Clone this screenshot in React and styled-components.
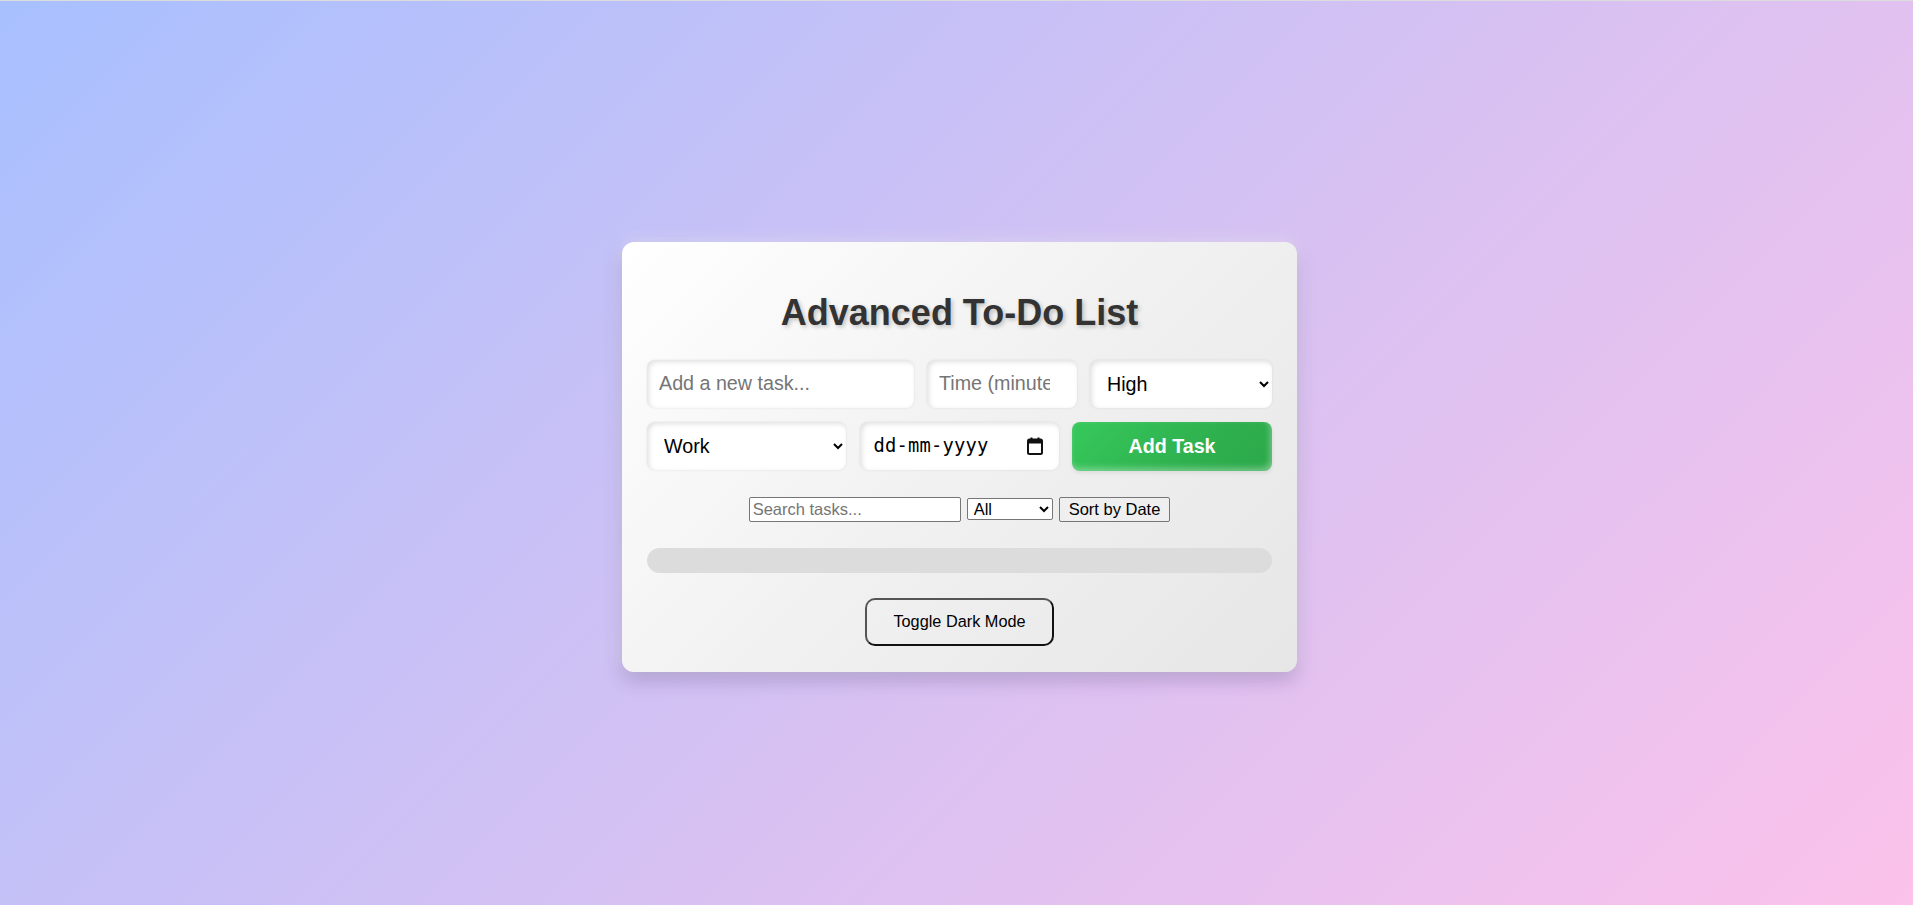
import styled, { createGlobalStyle } from 'styled-components'

const GlobalStyle = createGlobalStyle`
    html, body {
        margin: 0;
        padding: 0;
    }
    body {
        font-family: "Liberation Sans", Arial, sans-serif;
        background: linear-gradient(135deg, #a8c0ff 0%, #d3c1f3 50%, #fbc2eb 100%);
        border-top: 1px solid #dcdcdc;
        min-height: 100vh;
        box-sizing: border-box;
    }
`

const Page = styled.main`
    min-height: 904px;
    display: flex;
    align-items: center;
    justify-content: center;
    padding: 7px 0 0 6px;
    box-sizing: border-box;
`

const Card = styled.section`
    width: 675px;
    box-sizing: border-box;
    padding: 25px 25px 26px;
    border-radius: 12px;
    background: linear-gradient(135deg, #ffffff 0%, #f1f1f1 50%, #e6e6e6 100%);
    box-shadow: 0 8px 18px rgba(60, 40, 110, 0.28), 0 0 16px rgba(255, 255, 255, 0.55);
    display: flex;
    flex-direction: column;
    align-items: stretch;
`

const Title = styled.h1`
    margin: 25px 0 26px;
    text-align: center;
    font-size: 36px;
    font-weight: 700;
    color: #333;
    text-shadow: 2px 2px 4px rgba(0, 0, 0, 0.22);
`

const FormRow = styled.div`
    display: flex;
    justify-content: space-between;
    margin-bottom: ${p => p.$last ? '26px' : '14px'};
`

const fieldStyle = `
    height: 48px;
    box-sizing: border-box;
    border: none;
    border-radius: 8px;
    background: #fff;
    font-family: "Liberation Sans", Arial, sans-serif;
    font-size: 19.7px;
    color: #000;
    box-shadow: inset 2px 2px 5px rgba(0, 0, 0, 0.12), 0 0 3px rgba(0, 0, 0, 0.08);
    outline: none;
    min-width: 0;
`

const TextField = styled.input`
    ${fieldStyle}
    flex: 0 0 ${p => p.$width}px;
    padding: 0 12px;
    &::placeholder {
        color: #757575;
    }
`

const SelectField = styled.select`
    ${fieldStyle}
    flex: 0 0 ${p => p.$width}px;
    padding: 0 8px 0 13px;
`

const DateBox = styled.label`
    ${fieldStyle}
    flex: 0 0 ${p => p.$width}px;
    display: flex;
    align-items: center;
    justify-content: space-between;
    padding: 0 16px 0 14px;
`

const DateText = styled.span`
    font-family: "DejaVu Sans Mono", monospace;
    font-size: 18.8px;
    letter-spacing: 0.2px;
    color: #000;
`

const AddButton = styled.button`
    flex: 0 0 ${p => p.$width}px;
    height: 49px;
    border: none;
    border-radius: 8px;
    background: linear-gradient(135deg, #36c95b 0%, #2fb14f 60%, #2ca84a 100%);
    color: #fff;
    font-family: "Liberation Sans", Arial, sans-serif;
    font-size: 19.7px;
    font-weight: 700;
    box-shadow: inset -2px -3px 6px rgba(255, 255, 255, 0.35), 0 2px 4px rgba(0, 0, 0, 0.08);
    cursor: pointer;
`

const Toolbar = styled.div`
    display: flex;
    justify-content: center;
    align-items: center;
    gap: 6px;
    margin-bottom: 26px;
`

const Search = styled.input`
    width: 212px;
    height: 25px;
    box-sizing: border-box;
    border: 1px solid #767676;
    border-radius: 2px;
    padding: 0 3px;
    font-family: "Liberation Sans", Arial, sans-serif;
    font-size: 16.5px;
    background: #fff;
    &::placeholder {
        color: #757575;
    }
`

const Filter = styled.select`
    width: 86px;
    height: 22px;
    box-sizing: border-box;
    border: 1px solid #767676;
    border-radius: 2px;
    font-family: "Liberation Sans", Arial, sans-serif;
    font-size: 16.5px;
    background: #fff;
    color: #000;
    padding: 0 0 0 2px;
`

const SortButton = styled.button`
    height: 25px;
    box-sizing: border-box;
    padding: 0 9px;
    border: 1px solid #767676;
    border-radius: 2px;
    background: #efefef;
    font-family: "Liberation Sans", Arial, sans-serif;
    font-size: 16.5px;
    color: #000;
`

const Progress = styled.div`
    height: 25px;
    border-radius: 13px;
    background: #dcdcdc;
    margin-bottom: 25px;
    overflow: hidden;
`

const ProgressFill = styled.div`
    height: 100%;
    background: #34c759;
`

const ToggleButton = styled.button`
    align-self: center;
    width: 189px;
    height: 48px;
    box-sizing: border-box;
    border: 2px solid;
    border-color: #555 #111 #111 #555;
    border-radius: 10px;
    background: transparent;
    font-family: "Liberation Sans", Arial, sans-serif;
    font-size: 16.3px;
    color: #000;
    cursor: pointer;
`

const CalendarIcon = () => (
    <svg width="16" height="18" viewBox="0 0 16 18" aria-hidden="true">
        <rect x="1" y="2.5" width="14" height="14.5" rx="1.5" fill="none" stroke="#111" strokeWidth="2" />
        <rect x="1" y="2.5" width="14" height="4" fill="#111" />
        <rect x="3.5" y="0.5" width="2" height="3" fill="#111" />
        <rect x="10.5" y="0.5" width="2" height="3" fill="#111" />
    </svg>
)

const App = () => {
    const done = 0
    return <>
        <GlobalStyle />
        <Page>
            <Card>
                <Title>Advanced To-Do List</Title>
                <FormRow>
                    <TextField $width={267} placeholder="Add a new task..." />
                    <TextField $width={150} type="number" placeholder="Time (minutes)" />
                    <SelectField $width={182} defaultValue="High">
                        <option>High</option>
                        <option>Medium</option>
                        <option>Low</option>
                    </SelectField>
                </FormRow>
                <FormRow $last>
                    <SelectField $width={199} defaultValue="Work">
                        <option>Work</option>
                        <option>Personal</option>
                        <option>Shopping</option>
                    </SelectField>
                    <DateBox $width={199}>
                        <DateText>dd-mm-yyyy</DateText>
                        <CalendarIcon />
                    </DateBox>
                    <AddButton $width={200}>Add Task</AddButton>
                </FormRow>
                <Toolbar>
                    <Search placeholder="Search tasks..." />
                    <Filter defaultValue="All">
                        <option>All</option>
                        <option>Completed</option>
                        <option>Pending</option>
                    </Filter>
                    <SortButton>Sort by Date</SortButton>
                </Toolbar>
                <Progress>
                    <ProgressFill style={{ width: `${done}%` }} />
                </Progress>
                <ToggleButton>Toggle Dark Mode</ToggleButton>
            </Card>
        </Page>
    </>
}

export default App
